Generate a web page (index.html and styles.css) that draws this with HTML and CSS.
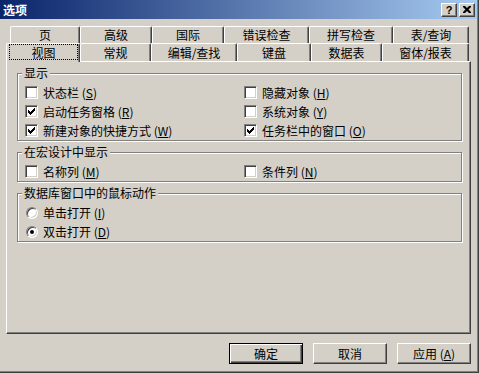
FILE: index.html
```html
<!DOCTYPE html>
<html lang="zh-CN">
<head>
<meta charset="utf-8">
<title>选项</title>
<link rel="stylesheet" href="styles.css">
</head>
<body>
<div class="window">
  <div class="titlebar">
    <span class="title">选项</span>
    <div class="tbtns">
      <span class="tbtn help">?</span>
      <span class="tbtn">
        <svg width="8" height="7" viewBox="0 0 8 7"><path d="M0 0h2l2 2 2-2h2v1l-2.5 2.5L8 6v1H6L4 5 2 7H0V6l2.5-2.5L0 1z" fill="#000"/></svg>
      </span>
    </div>
  </div>

  <div class="tabs">
    <div class="tabrow back">
      <div class="tab t-ye">页</div>
      <div class="tab t-gaoji">高级</div>
      <div class="tab t-guoji">国际</div>
      <div class="tab t-cuowu">错误检查</div>
      <div class="tab t-pinxie">拼写检查</div>
      <div class="tab t-biao">表/查询</div>
    </div>
    <div class="tabrow front">
      <div class="tab t-shitu selected"><span class="focus">视图</span></div>
      <div class="tab t-changgui">常规</div>
      <div class="tab t-bianji">编辑/查找</div>
      <div class="tab t-jianpan">键盘</div>
      <div class="tab t-shuju">数据表</div>
      <div class="tab t-chuangti">窗体/报表</div>
    </div>
  </div>

  <div class="panel">
    <div class="group">
      <div class="legend">显示</div>
      <div class="grid">
        <div class="opt"><span class="cb"></span><span class="lbl">状态栏 (<u>S</u>)</span></div>
        <div class="opt"><span class="cb"></span><span class="lbl">隐藏对象 (<u>H</u>)</span></div>
        <div class="opt"><span class="cb"><svg width="11" height="11" viewBox="0 0 11 11"><path d="M2 4h1v3H2zM3 5h1v3H3zM4 6h1v3H4zM5 5h1v3H5zM6 4h1v3H6zM7 3h1v3H7zM8 2h1v3H8z" fill="#000"/></svg></span><span class="lbl">启动任务窗格 (<u>R</u>)</span></div>
        <div class="opt"><span class="cb"></span><span class="lbl">系统对象 (<u>Y</u>)</span></div>
        <div class="opt"><span class="cb"><svg width="11" height="11" viewBox="0 0 11 11"><path d="M2 4h1v3H2zM3 5h1v3H3zM4 6h1v3H4zM5 5h1v3H5zM6 4h1v3H6zM7 3h1v3H7zM8 2h1v3H8z" fill="#000"/></svg></span><span class="lbl">新建对象的快捷方式 (<u>W</u>)</span></div>
        <div class="opt"><span class="cb"><svg width="11" height="11" viewBox="0 0 11 11"><path d="M2 4h1v3H2zM3 5h1v3H3zM4 6h1v3H4zM5 5h1v3H5zM6 4h1v3H6zM7 3h1v3H7zM8 2h1v3H8z" fill="#000"/></svg></span><span class="lbl">任务栏中的窗口 (<u>O</u>)</span></div>
      </div>
    </div>

    <div class="group">
      <div class="legend">在宏设计中显示</div>
      <div class="grid">
        <div class="opt"><span class="cb"></span><span class="lbl">名称列 (<u>M</u>)</span></div>
        <div class="opt"><span class="cb"></span><span class="lbl">条件列 (<u>N</u>)</span></div>
      </div>
    </div>

    <div class="group">
      <div class="legend">数据库窗口中的鼠标动作</div>
      <div class="opt"><span class="rb"></span><span class="lbl">单击打开 (<u>I</u>)</span></div>
      <div class="opt"><span class="rb on"></span><span class="lbl">双击打开 (<u>D</u>)</span></div>
    </div>
  </div>

  <div class="buttons">
    <button class="btn default">确定</button>
    <button class="btn">取消</button>
    <button class="btn">应用 (<u>A</u>)</button>
  </div>
</div>
</body>
</html>
```

FILE: styles.css
```css
* { box-sizing: border-box; }
html, body { margin: 0; padding: 0; }
body {
  background: #d4d0c8;
  font-family: "Noto Sans CJK SC", "Noto Sans", sans-serif;
  font-size: 12px;
  color: #000;
  width: 479px;
  height: 373px;
  overflow: hidden;
}
.window {
  width: 479px;
  height: 373px;
  display: flex;
  flex-direction: column;
  border-right: 1px solid #404040;
  border-bottom: 1px solid #404040;
  box-shadow: inset -1px -1px 0 #808080;
}
.titlebar {
  height: 19px;
  margin-right: 1px;
  background: linear-gradient(to right, #0a246a, #a6caf0);
  display: flex;
  align-items: center;
  justify-content: space-between;
  padding: 0 2px 0 3px;
}
.title {
  color: #fff;
  font-weight: bold;
  font-size: 12px;
  line-height: 19px;
}
.tbtns { display: flex; gap: 2px; }
.tbtn {
  width: 16px;
  height: 14px;
  background: #d4d0c8;
  border-top: 1px solid #fff;
  border-left: 1px solid #fff;
  border-right: 1px solid #404040;
  border-bottom: 1px solid #404040;
  box-shadow: inset -1px -1px 0 #808080;
  display: flex;
  align-items: center;
  justify-content: center;
}
.tbtn.help {
  font-family: "Liberation Sans", sans-serif;
  font-weight: bold;
  font-size: 11px;
  line-height: 12px;
}
.tabs { padding-top: 7px; }
.tabrow { display: flex; }
.tabrow.back { margin-left: 10px; height: 17px; }
.tabrow.front { margin-left: 6px; height: 18px; }
.tab {
  border-top: 1px solid #fff;
  border-left: 1px solid #fff;
  border-right: 1px solid #404040;
  box-shadow: inset -1px 0 0 #808080;
  border-top-left-radius: 2px;
  border-top-right-radius: 2px;
  text-align: center;
  line-height: 16px;
  background: #d4d0c8;
}
.tabrow.front .tab { line-height: 17px; }
.tab.selected {
  position: relative;
  z-index: 1;
  height: 19px;
  padding: 0 1px 0 2px;
}
.focus {
  display: block;
  height: 16px;
  line-height: 15px;
  border: 1px dotted #000;
}
.t-ye { width: 70px; }
.t-gaoji { width: 72px; }
.t-guoji { width: 72px; }
.t-cuowu { width: 85px; }
.t-pinxie { width: 84px; }
.t-biao { width: 76px; }
.t-shitu { width: 74px; }
.t-changgui { width: 71px; }
.t-bianji { width: 86px; }
.t-jianpan { width: 74px; }
.t-shuju { width: 71px; }
.t-chuangti { width: 87px; }

.panel {
  margin: 0 7px 0 6px;
  height: 273px;
  border-top: 1px solid #fff;
  border-left: 1px solid #fff;
  border-right: 1px solid #404040;
  border-bottom: 1px solid #404040;
  box-shadow: inset -1px -1px 0 #808080;
  padding: 11px 8px 0 10px;
}
.group {
  border: 1px solid #808080;
  box-shadow: 1px 1px 0 #fff, inset 1px 1px 0 #fff;
  padding: 0 0 0 7px;
}
.group + .group { margin-top: 11px; }
.legend {
  width: fit-content;
  margin: -8px 0 3px -3px;
  padding: 0 2px;
  height: 14px;
  line-height: 14px;
  background: #d4d0c8;
}
.grid {
  display: grid;
  grid-template-columns: 219px 1fr;
}
.opt {
  display: flex;
  align-items: center;
  height: 19px;
  gap: 5px;
}
.lbl { line-height: 14px; white-space: nowrap; }
.cb {
  width: 13px;
  height: 13px;
  flex: none;
  background: #fff;
  border-top: 1px solid #808080;
  border-left: 1px solid #808080;
  border-right: 1px solid #fff;
  border-bottom: 1px solid #fff;
  box-shadow: inset 1px 1px 0 #404040, inset -1px -1px 0 #d4d0c8;
}
.cb svg { display: block; }
.rb {
  width: 12px;
  height: 12px;
  flex: none;
  margin-left: 1px;
  border-radius: 50%;
  background: #fff;
  border: 1px solid;
  border-color: #808080 #fff #fff #808080;
  box-shadow: inset 1px 1px 0 #404040, inset -1px -1px 0 #d4d0c8;
  display: flex;
  align-items: center;
  justify-content: center;
}
.rb.on::after {
  content: "";
  width: 4px;
  height: 4px;
  background: #000;
  border-radius: 50%;
}
.buttons {
  display: flex;
  justify-content: flex-end;
  gap: 10px;
  margin: 9px 7px 0 0;
}
.btn {
  width: 74px;
  height: 21px;
  padding: 0;
  font-family: inherit;
  font-size: 12px;
  color: #000;
  background: #d4d0c8;
  border-top: 1px solid #fff;
  border-left: 1px solid #fff;
  border-right: 1px solid #404040;
  border-bottom: 1px solid #404040;
  border-radius: 0;
  box-shadow: inset -1px -1px 0 #808080;
  line-height: 17px;
}
.btn.default {
  border: 1px solid #000;
  box-shadow: inset 1px 1px 0 #fff, inset -1px -1px 0 #404040, inset -2px -2px 0 #808080;
}
```
